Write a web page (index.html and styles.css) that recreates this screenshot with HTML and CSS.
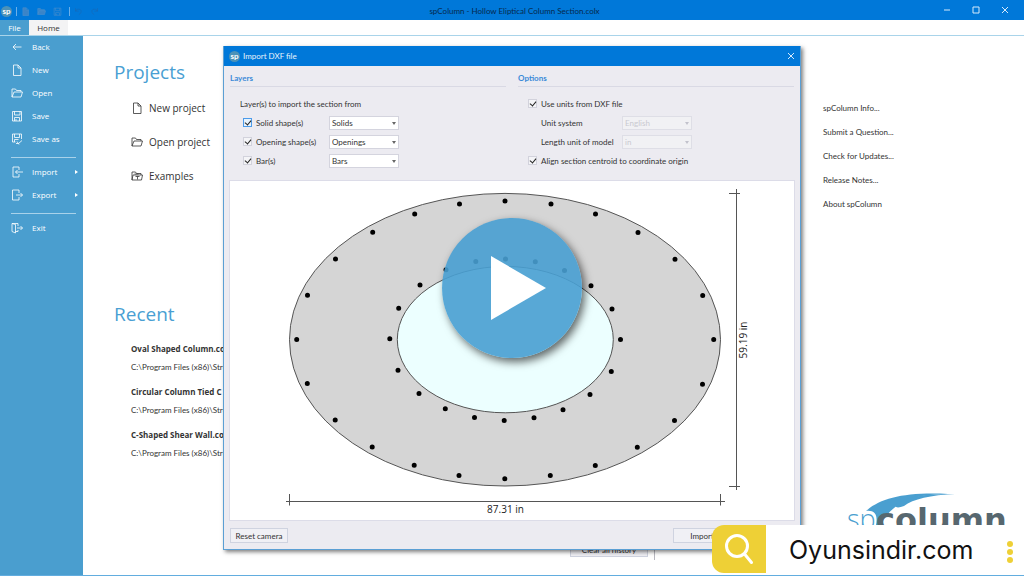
FILE: index.html
```html
<!DOCTYPE html>
<html lang="en">
<head>
<meta charset="utf-8">
<title>spColumn - Hollow Eliptical Column Section.colx</title>
<link rel="stylesheet" href="styles.css">
</head>
<body>
<svg class="defs" aria-hidden="true">
  <symbol id="i-new" viewBox="0 0 12 12"><path d="M2.500 1h4.500l3 3v7.500h-7.500zM7 1v3h3"/></symbol>
  <symbol id="i-open" viewBox="0 0 12 12"><path d="M1 10V2h3.500l1 1.500h4.500V5M1 10l2-5h8.500l-1.500 5z"/></symbol>
  <symbol id="i-save" viewBox="0 0 12 12"><path d="M1.500 1.500h9v9.500h-9zM3.500 1.500V5h5.500V1.500M3.500 11V7.500h5V11M5 9v2"/></symbol>
</svg>
<div class="app">
  <header class="titlebar">
    <div class="quick">
      <span class="badge">sp</span>
      <i class="bar"></i>
      <button class="q" aria-label="New"><svg class="icon filled"><use href="#i-new"/></svg></button>
      <button class="q" aria-label="Open"><svg class="icon filled"><use href="#i-open"/></svg></button>
      <button class="q" aria-label="Save"><svg class="icon"><use href="#i-save"/></svg></button>
      <i class="bar"></i>
      <button class="q dim" aria-label="Undo"><svg class="icon" viewBox="0 0 12 12"><path d="M2 1.500v4h4M2 5.500c2-4 8-3 7.500 0.500C9.500 8 8 9 6.500 10.500"/></svg></button>
      <button class="q dim" aria-label="Redo"><svg class="icon" viewBox="0 0 12 12"><path d="M10 1.500v4H6M10 5.500c-2-4-8-3-7.500 0.500C2.500 8 4 9 5.500 10.500"/></svg></button>
    </div>
    <h1 class="title">spColumn - Hollow Eliptical Column Section.colx</h1>
    <div class="winctl">
      <button aria-label="Minimize"><svg viewBox="0 0 10 10"><path d="M2 5h6"/></svg></button>
      <button aria-label="Maximize"><svg viewBox="0 0 10 10"><path d="M2 2h6v6h-6z"/></svg></button>
      <button aria-label="Close"><svg viewBox="0 0 10 10"><path d="M2 2l6 6M8 2l-6 6"/></svg></button>
    </div>
  </header>
  <nav class="tabs">
    <button class="tab active">File</button>
    <button class="tab">Home</button>
  </nav>
  <div class="body">
    <nav class="side">
      <button class="item"><svg class="icon" viewBox="0 0 12 12"><path d="M10.500 6H2M5 3L2 6L5 9"/></svg>Back</button>
      <button class="item"><svg class="icon"><use href="#i-new"/></svg>New</button>
      <button class="item"><svg class="icon"><use href="#i-open"/></svg>Open</button>
      <button class="item"><svg class="icon"><use href="#i-save"/></svg>Save</button>
      <button class="item"><svg class="icon" viewBox="0 0 12 12"><path d="M1.500 1h9v5M1.500 1v8h3M3.500 1v3.500h5V1M3.500 9V6.500h4M5 10.500h2.500l3.500-3M6 8.500l2 3"/></svg>Save as</button>
      <hr>
      <button class="item more"><svg class="icon" viewBox="0 0 12 12"><path d="M8 4V1H2v10h6V8M12 6H4.500M6.500 4l-2 2l2 2"/></svg>Import</button>
      <button class="item more"><svg class="icon" viewBox="0 0 12 12"><path d="M8 4V1H1.500v10H8V8M5 6h6.500M9.500 4l2 2l-2 2"/></svg>Export</button>
      <hr>
      <button class="item"><svg class="icon" viewBox="0 0 12 12"><path d="M1 1.500l3.500 1v8.500l-3.500-1.500zM1 1.500h6v2.500M4.500 9.500H7V8M6 6h5.500M9.500 4l2 2l-2 2"/></svg>Exit</button>
    </nav>
    <main class="content">
      <section class="projects">
        <h2>Projects</h2>
        <a class="action" href="#"><svg class="icon"><use href="#i-new"/></svg>New project</a>
        <a class="action" href="#"><svg class="icon"><use href="#i-open"/></svg>Open project</a>
        <a class="action" href="#"><svg class="icon" viewBox="0 0 12 12"><path d="M1 10V2h3.500l1 1.500h4.500V5M1 10l1-5h9.500l-1 5zM4.500 6.500h4M6.500 6.500v3M3.500 4h4"/></svg>Examples</a>
      </section>
      <section class="recent">
        <h2>Recent</h2>
        <a class="file" href="#"><b>Oval Shaped Column.colx</b><span>C:\Program Files (x86)\Structure</span></a>
        <a class="file" href="#"><b>Circular Column Tied C</b><span>C:\Program Files (x86)\Structure</span></a>
        <a class="file" href="#"><b>C-Shaped Shear Wall.colx</b><span>C:\Program Files (x86)\Structure</span></a>
      </section>
      <div class="history"><button class="btn">Clear all history</button></div>
    </main>
    <aside class="links">
      <a href="#">spColumn Info...</a>
      <a href="#">Submit a Question...</a>
      <a href="#">Check for Updates...</a>
      <a href="#">Release Notes...</a>
      <a href="#">About spColumn</a>
      <svg class="logo" viewBox="0 0 164 40" role="img" aria-label="spcolumn">
        <path class="swoosh" d="M19 18C34 5 58 -1 101 1C66 1 44 10 34 32H29C31 22 28 17 19 18z"/>
        <path class="swoosh" d="M48 12C60 3 78 1 108 1C84 2 66 6 57 13C52 15 48 15 48 12z"/>
        <text class="logo-sp" x="0" y="36">sp</text>
        <text class="logo-col" x="29" y="38">column</text>
      </svg>
    </aside>
  </div>
</div>

<div class="dialog" role="dialog" aria-labelledby="dlg-title">
  <header class="dlg-head">
    <span class="badge">sp</span>
    <h2 id="dlg-title">Import DXF file</h2>
    <button aria-label="Close dialog"><svg viewBox="0 0 10 10"><path d="M2 2l6 6M8 2l-6 6"/></svg></button>
  </header>
  <div class="dlg-body">
    <div class="cols">
      <section class="layers">
        <h3>Layers</h3>
        <p class="row">Layer(s) to import the section from</p>
        <div class="row sub"><input type="checkbox" id="c1" class="focus" checked><label for="c1">Solid shape(s)</label><span class="sel"><select aria-label="Solid layer"><option>Solids</option></select></span></div>
        <div class="row sub"><input type="checkbox" id="c2" checked><label for="c2">Opening shape(s)</label><span class="sel"><select aria-label="Opening layer"><option>Openings</option></select></span></div>
        <div class="row sub"><input type="checkbox" id="c3" checked><label for="c3">Bar(s)</label><span class="sel"><select aria-label="Bar layer"><option>Bars</option></select></span></div>
      </section>
      <section class="options">
        <h3>Options</h3>
        <div class="row"><input type="checkbox" id="c4" checked><label for="c4">Use units from DXF file</label></div>
        <div class="row unit"><label for="s4">Unit system</label><span class="sel"><select id="s4" disabled><option>English</option></select></span></div>
        <div class="row unit"><label for="s5">Length unit of model</label><span class="sel"><select id="s5" disabled><option>in</option></select></span></div>
        <div class="row"><input type="checkbox" id="c5" checked><label for="c5">Align section centroid to coordinate origin</label></div>
      </section>
    </div>
    <svg class="canvas" viewBox="230 181 564 339" role="img" aria-label="Column section preview">
      <ellipse class="solid" cx="505" cy="339.700" rx="215.500" ry="146.300"/>
      <ellipse class="opening" cx="505.300" cy="339.600" rx="108" ry="73.200"/>
      <g class="rebar">
        <path d="M505 201h0M551 204h0M595.500 214h0M638 232.500h0M675 259.300h0M702.700 295.500h0M713.700 339.600h0M702.500 384.300h0M674.500 420.500h0M637.300 447.300h0M595.300 465.500h0M550.300 475.500h0M504.800 478.800h0M459 475.500h0M414.200 465.300h0M372.200 447h0M335.200 420h0M307.300 383.600h0M296.700 339.500h0M307.500 295.300h0M335.500 259h0M372.700 232.300h0M414.700 214h0M459.500 204h0"/>
        <path d="M620.500 339.600h0M612 309h0M591 285.800h0M564.500 270.500h0M535.300 261.800h0M505.500 259h0M475.800 261.500h0M446 269.800h0M420 285h0M398.700 308.300h0M389.800 338.800h0M398 370.300h0M419 393.500h0M445.300 408.800h0M474.500 417.500h0M504.200 420.500h0M534 417.800h0M563 409.700h0M590 394.500h0M611.300 371.500h0"/>
      </g>
      <path class="dim-line" d="M286 501.500H725M289.500 494V505.500M720.500 494V505.500M736.500 189V490M729 193.500H740M729 486.500H740"/>
      <text class="dim-text" x="505.500" y="513">87.31 in</text>
      <text class="dim-text" transform="translate(747 340) rotate(-90)">59.19 in</text>
    </svg>
    <footer class="dlg-foot">
      <button class="btn">Reset camera</button>
      <button class="btn import">Import</button>
    </footer>
  </div>
</div>

<button class="play" aria-label="Play video"><svg viewBox="0 0 140 140"><path d="M49 38v64l55-32z"/></svg></button>

<div class="banner">
  <span class="search"><svg viewBox="0 0 54 48"><circle cx="25" cy="21" r="10.500"/><path d="M32.500 29l7 8.500"/></svg></span>
  <a href="#">Oyunsindir.com</a>
  <button class="dots" aria-label="More"><i></i><i></i><i></i></button>
</div>
</body>
</html>
```

FILE: styles.css
```css
* { box-sizing: border-box; }
html, body { margin: 0; min-height: 100%; }
body {
  position: relative;
  overflow: hidden;
  background: #fff;
  color: #333;
  font: 8px/12px "Lato", "Open Sans", sans-serif;
}
h1, h2, h3, p { margin: 0; font-weight: 400; font-size: inherit; }
button { margin: 0; padding: 0; border: 0; background: none; color: inherit; font: inherit; }
a { color: inherit; text-decoration: none; }
svg { display: block; }
.defs { position: absolute; width: 0; height: 0; }
.icon { width: 12px; height: 12px; fill: none; stroke: currentColor; stroke-width: 0.8; }

.app { display: flex; flex-direction: column; min-height: 100vh; border-bottom: 1px solid #62addf; }
.titlebar {
  display: grid;
  grid-template-columns: 1fr auto 1fr;
  align-items: center;
  height: 20px;
  background: #0078d9;
}
.title { color: #06294d; padding: 2px 0 0 5px; }
.quick { display: flex; align-items: center; gap: 4px; padding: 2px 0 0 1px; }
.quick .bar { width: 1px; height: 9px; background: #6cb0ea; }
.q { width: 12px; color: #4a8fcc; }
.q .icon { width: 9px; height: 9px; }
.q .icon.filled { fill: #3a84c8; }
.q.dim { color: #1a68b4; }
.badge {
  width: 11px;
  height: 11px;
  border-radius: 50%;
  background: #4c92b8;
  color: #fff;
  font-weight: 700;
  line-height: 10px;
  text-align: center;
}
.winctl { display: flex; justify-content: flex-end; gap: 19px; padding-right: 14px; }
.winctl svg, .dlg-head svg { width: 10px; height: 10px; fill: none; stroke: #d7eafa; stroke-width: 1; }

.tabs { display: flex; height: 16px; border-bottom: 1px solid #a9d4ea; font-family: "Open Sans", sans-serif; }
.tab { width: 39px; background: #f3f3f4; color: #333; }
.tab.active { width: 29px; background: #4a9ecf; color: #fff; }

.body { display: flex; flex: 1; }
.side { width: 83px; background: #4a9ecf; color: #fff; font-family: "Open Sans", sans-serif; }
.item { display: flex; align-items: center; gap: 9px; width: 100%; height: 23px; padding: 0 0 1px 11px; }
.side hr { margin: 6px 7px 3px 11px; border: 0; border-top: 1px solid #a9d2ea; }
.more::after {
  content: "";
  margin: 0 5px 0 auto;
  border: 2px solid transparent;
  border-left: 3px solid #fff;
  border-right: 0;
}
.content { display: flex; flex-direction: column; flex: 1; padding: 22px 0 15px 31px; }
.content h2 { color: #4a9fd3; font: 19px/28px "Open Sans", sans-serif; }
.projects { height: 242px; }
.action { display: flex; align-items: center; gap: 6px; height: 34px; padding-left: 17px; font: 10px "Open Sans", sans-serif; }
.projects h2 { margin-bottom: 5px; }
.recent h2 { margin-bottom: 15px; }
.file { display: flex; flex-direction: column; gap: 6px; height: 43px; padding-left: 17px; }
.file b { font: 700 8px/12px "Open Sans", sans-serif; }
.history { display: flex; justify-content: flex-end; margin-top: auto; padding: 0 6px 3px 0; border-right: 1px solid #b8b8c0; width: 541px; }
.history .btn { width: 78px; line-height: 14px; }
.links { display: flex; flex-direction: column; width: 201px; padding: 60px 16px 42px 0; }
.links a { line-height: 24px; }
.logo { width: 164px; height: 40px; margin: auto 0 0 24px; overflow: visible; }
.logo-sp { font: 300 27px "Open Sans", sans-serif; fill: #4a9fd0; }
.logo-col { font: 700 32px "DejaVu Sans", sans-serif; fill: #57676f; }
.swoosh { fill: #4a9fd0; }

.btn { height: 15px; border: 1px solid #cfd3e0; background: #f0f0f5; color: #333; }

.dialog {
  position: absolute;
  top: 46px;
  left: 50%;
  width: 578px;
  transform: translateX(-50%);
  border: 1px solid #5b9fd4;
  border-top: 0;
  background: #ecebf1;
  box-shadow: 2px 2px 4px rgba(0, 0, 0, 0.5);
}
.dlg-head { display: flex; align-items: center; gap: 3px; height: 20px; padding: 0 4px 0 5px; background: #0078d9; color: #e8f3fc; }
.dlg-head button { margin-left: auto; }
.dlg-body { padding: 7px 6px 6px; }
.cols { display: grid; grid-template-columns: 1fr 1fr; gap: 12px; }
.cols h3 { height: 14px; margin-bottom: 7px; border-bottom: 1px solid #d9d9e4; color: #3a8ad8; font-weight: 700; line-height: 11px; }
.row { display: flex; align-items: center; height: 19px; padding-left: 10px; white-space: nowrap; }
.row.sub { padding-left: 13px; }
.row.sub label { width: 73px; }
.row.unit { padding-left: 23px; }
.row.unit label { width: 81px; }
input[type="checkbox"] {
  appearance: none;
  position: relative;
  width: 9px;
  height: 9px;
  margin: 0 4px 0 0;
  border: 1px solid #d2d2dc;
  background: #f4f4f7;
}
input[type="checkbox"]::after {
  content: "";
  position: absolute;
  left: 2px;
  top: 0;
  width: 3px;
  height: 5px;
  border: solid #222;
  border-width: 0 1px 1px 0;
  transform: rotate(40deg);
}
input[type="checkbox"].focus { border-color: #4c9bea; background: #e6f2fd; }
.sel { position: relative; width: 70px; }
.sel::after {
  content: "";
  position: absolute;
  right: 3px;
  top: 6px;
  border: 2px solid transparent;
  border-top: 3px solid #666;
  border-bottom: 0;
}
select {
  display: block;
  appearance: none;
  width: 100%;
  height: 14px;
  padding: 0 2px;
  border: 1px solid #d4d4de;
  border-radius: 0;
  background: #fff;
  color: #333;
  font: inherit;
}
select:disabled { background: #f1f1f4; color: #c9c9d0; border-color: #dedee6; opacity: 1; }
.unit .sel::after { border-top-color: #c2c2cc; }
.canvas { width: 100%; margin-top: 11px; background: #fff; outline: 1px solid #dcdce8; }
.solid { fill: #d5d5d5; stroke: #555; stroke-width: 1; }
.opening { fill: #ecffff; stroke: #555; stroke-width: 1; }
.rebar { fill: none; stroke: #000; stroke-width: 5; stroke-linecap: round; }
.dim-line { fill: none; stroke: #555; stroke-width: 1; }
.dim-text { fill: #222; font: 10px "Open Sans", sans-serif; text-anchor: middle; }
.dlg-foot { display: flex; justify-content: space-between; padding: 8px 63px 0 0; }
.dlg-foot .btn { width: 58px; }

.play {
  position: absolute;
  top: 50%;
  left: 50%;
  width: 140px;
  height: 140px;
  transform: translate(-50%, -50%);
  border-radius: 50%;
  background: rgba(72, 158, 210, 0.9);
  box-shadow: 3px 4px 8px rgba(0, 0, 0, 0.6);
}
.play path { fill: #fff; }

.banner {
  position: absolute;
  right: 0;
  bottom: 1px;
  display: flex;
  align-items: flex-start;
  width: 312px;
  height: 50px;
  border-radius: 14px 0 0 14px;
  background: #fff;
  color: #111;
}
.search { width: 54px; height: 48px; border-radius: 12px 0 0 12px; background: #eed036; }
.search svg { fill: none; stroke: #fff; stroke-width: 3; stroke-linecap: round; }
.banner a { padding-left: 23px; font: 25px/50px "Inter", sans-serif; }
.dots { display: flex; flex-direction: column; gap: 2px; margin: 16px 11px 0 auto; }
.dots i { width: 6px; height: 6px; border-radius: 50%; background: #eed036; }
```
